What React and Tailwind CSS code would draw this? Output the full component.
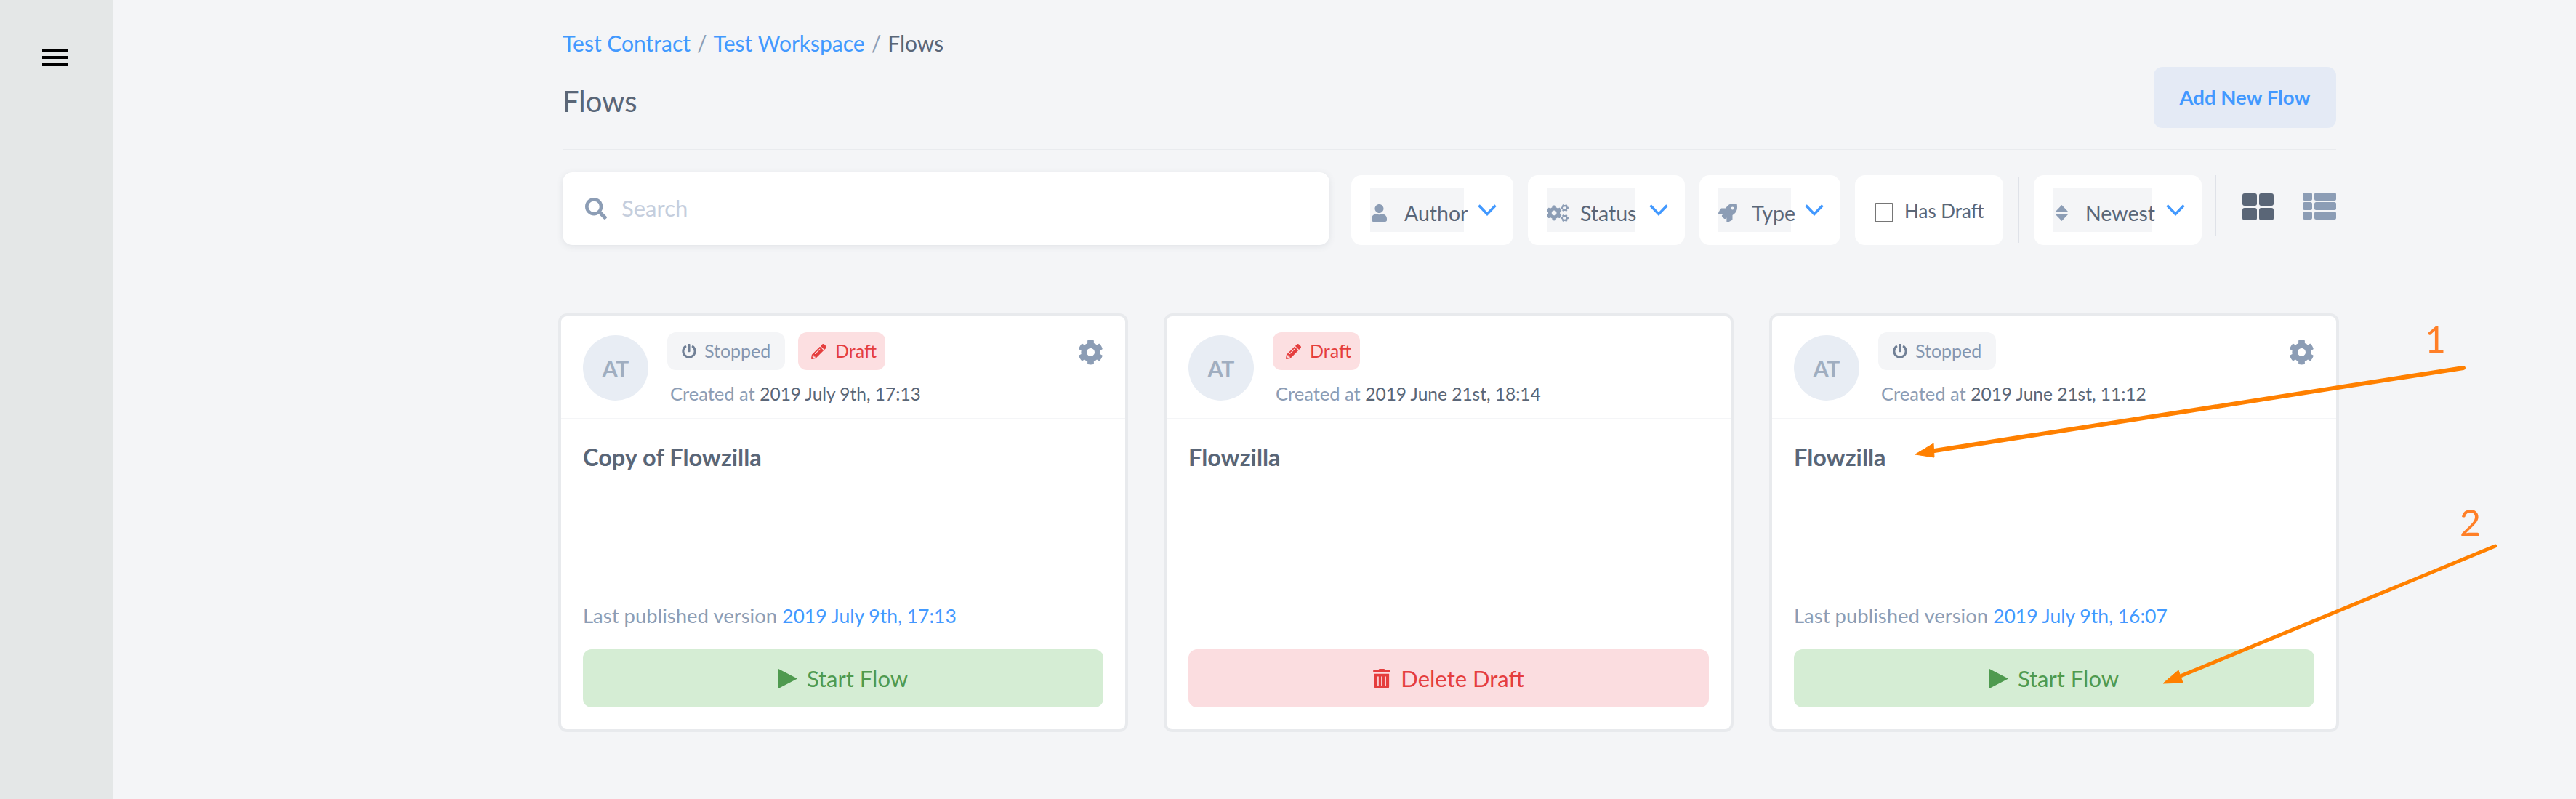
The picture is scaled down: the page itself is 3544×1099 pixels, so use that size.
import { FaUser, FaCogs, FaRocket, FaSearch, FaPowerOff, FaPencilAlt, FaCog, FaTrashAlt } from "react-icons/fa";

const Chevron = () => (
    <svg viewBox="0 0 26 16" className="w-[26px] h-[16px] shrink-0 text-[#4299ff]" fill="none" stroke="currentColor" strokeWidth="3.5">
        <path d="M1.5 1.5 L13 13.5 L24.5 1.5" />
    </svg>
)

const Filter = ({ icon, label, className, boxClassName, gap = "gap-[24px]" }) => (
    <div className={"h-[96px] bg-white rounded-[14px] flex items-center shrink-0 pl-[26px] " + className}>
        <div className={"h-[60px] pt-[8px] bg-[#f4f5f7] flex items-center " + boxClassName + " " + gap}>
            {icon}
            <span className="text-[28.5px] text-[#5a6677] whitespace-nowrap">{label}</span>
        </div>
        <div className="ml-[19px]"><Chevron /></div>
    </div>
)

const Stopped = () => (
    <div className="h-[52px] w-[162px] rounded-[12px] bg-[#f4f5f7] flex items-center pl-[20px] gap-[11px] text-[#8496b0] text-[25px]">
        <FaPowerOff className="w-[20px] h-[22px] text-[#718096]" />
        <span>Stopped</span>
    </div>
)

const Draft = () => (
    <div className="h-[52px] w-[120px] rounded-[12px] bg-[#fcdfe1] flex items-center pl-[18px] gap-[12px] text-[#e53e3e] text-[25px]">
        <FaPencilAlt className="w-[21px] h-[21px]" />
        <span>Draft</span>
    </div>
)

const Card = ({ stopped, draft, gear, created, title, published, danger }) => (
    <div className="w-[784px] h-[576px] border-4 border-[#e8eaed] rounded-[12px] bg-white flex flex-col shrink-0">
        <div className="h-[142px] px-[30px] pt-[22px] flex border-b-2 border-[#f4f5f7] shrink-0">
            <div className="w-[90px] h-[90px] mt-[4px] rounded-full bg-[#e8edf4] text-[#a0aec0] font-bold text-[30px] flex items-center justify-center shrink-0">AT</div>
            <div className="ml-[26px]">
                <div className="flex gap-[18px]">
                    {stopped && <Stopped />}
                    {draft && <Draft />}
                </div>
                <div className="mt-[16px] pl-[4px] text-[25.5px] leading-[32px] text-[#8c9db5]">
                    Created at <span className="text-[24.5px] text-[#5a6677]">{created}</span>
                </div>
            </div>
            {gear && <FaCog className="ml-auto mt-[10px] w-[35px] h-[35px] text-[#8c9db5] shrink-0" />}
        </div>
        <div className="flex-1 flex flex-col px-[30px] pb-[30px]">
            <div className="mt-[32px] text-[32.5px] leading-[40px] font-bold text-[#5a6677]">{title}</div>
            <div className="mt-auto">
                {published && (
                    <div className="mb-[30px] text-[27.5px] leading-[32px] text-[#8c9db5]">
                        Last published version <span className="text-[26.5px] text-[#4299ff]">{published}</span>
                    </div>
                )}
                {danger ? (
                    <button className="w-full h-[80px] rounded-[12px] bg-[#fbdde0] text-[#e53e3e] text-[31px] flex items-center justify-center gap-[14px]">
                        <FaTrashAlt className="w-[24px] h-[27px]" />
                        Delete Draft
                    </button>
                ) : (
                    <button className="w-full h-[80px] rounded-[12px] bg-[#d5edd4] text-[#4f9a4f] text-[31px] flex items-center justify-center gap-[13px]">
                        <svg viewBox="0 0 26 27" className="w-[26px] h-[27px]" fill="currentColor"><path d="M0 0 L26 13.5 L0 27 Z" /></svg>
                        Start Flow
                    </button>
                )}
            </div>
        </div>
    </div>
)

export default function App() {
    return (
        <div className="relative flex min-h-[1099px] h-[1099px] overflow-hidden bg-[#f4f5f7] font-['Lato',sans-serif]">
            <aside className="w-[156px] shrink-0 bg-[#e4e7e7] pt-[67px] pl-[58px]">
                <div className="w-[36px] h-[24px] flex flex-col justify-between">
                    <div className="h-[4px] bg-black" />
                    <div className="h-[4px] bg-black" />
                    <div className="h-[4px] bg-black" />
                </div>
            </aside>
            <main className="ml-[618px] w-[2440px] shrink-0">
                <div className="pt-[39px] text-[30px] leading-[40px] text-[#8c9db5] flex gap-[9px]">
                    <span className="text-[#4299ff]">Test Contract</span>
                    <span>/</span>
                    <span className="text-[#4299ff]">Test Workspace</span>
                    <span>/</span>
                    <span className="text-[#5a6677]">Flows</span>
                </div>
                <div className="mt-[13px] pb-[29px] border-b-2 border-[#e9ebee] flex items-center justify-between">
                    <h1 className="mt-[10px] text-[40px] text-[#5a6677]">Flows</h1>
                    <button className="w-[251px] h-[84px] rounded-[12px] bg-[#e4eaf5] text-[#4299ff] font-bold text-[27.5px]">Add New Flow</button>
                </div>
                <div className="mt-[30px] flex items-start">
                    <div className="w-[1055px] h-[100px] bg-white rounded-[14px] shadow-[0_2px_10px_rgba(90,102,119,0.12)] flex items-center pl-[31px] gap-[20px] shrink-0">
                        <FaSearch className="w-[30px] h-[30px] text-[#8c9db5]" />
                        <span className="text-[31px] text-[#c5cedd] mt-[-2px]">Search</span>
                    </div>
                    <div className="ml-[30px] mt-[4px] flex items-start">
                        <Filter className="w-[223px]" boxClassName="w-[129px] pl-[2px]" icon={<FaUser className="w-[21px] h-[24px] text-[#8c9db5] shrink-0" />} label="Author" />
                        <Filter className="w-[216px] ml-[20px]" boxClassName="w-[122px]" icon={<FaCogs className="w-[30px] h-[26px] text-[#8c9db5] shrink-0" />} label="Status" gap="gap-[16px]" />
                        <Filter className="w-[194px] ml-[20px]" boxClassName="w-[100px]" icon={<FaRocket className="w-[26px] h-[26px] text-[#8c9db5] shrink-0" />} label="Type" gap="gap-[20px]" />
                        <div className="w-[204px] h-[96px] ml-[20px] bg-white rounded-[14px] flex items-center pl-[27px] gap-[15px] shrink-0">
                            <div className="w-[26px] h-[27px] border-2 border-[#767676] rounded-[2px] mt-[7px]" />
                            <span className="text-[26px] text-[#5a6677] whitespace-nowrap mt-[2px]">Has Draft</span>
                        </div>
                        <div className="w-[2px] h-[90px] ml-[20px] mt-[3px] bg-[#dfe2e8]" />
                        <Filter className="w-[231px] ml-[20px]" boxClassName="w-[137px] pl-[4px]" icon={
                            <svg viewBox="0 0 17 22" className="w-[17px] h-[22px] text-[#8c9db5] shrink-0" fill="currentColor">
                                <path d="M0 9 L8.5 0 L17 9 Z" />
                                <path d="M0 13 L17 13 L8.5 22 Z" />
                            </svg>
                        } label="Newest" />
                        <div className="w-[2px] h-[84px] ml-[18px] bg-[#dfe2e8]" />
                        <svg viewBox="0 0 43 37" className="w-[43px] h-[37px] ml-[36px] mt-[25px] text-[#5a6677]" fill="currentColor">
                            <rect x="0" y="0" width="20" height="17" rx="3" />
                            <rect x="23" y="0" width="20" height="17" rx="3" />
                            <rect x="0" y="20" width="20" height="17" rx="3" />
                            <rect x="23" y="20" width="20" height="17" rx="3" />
                        </svg>
                        <svg viewBox="0 0 46 37" className="w-[46px] h-[37px] ml-[40px] mt-[24px] text-[#8c9db5]" fill="currentColor">
                            <rect x="0" y="0" width="13" height="11" rx="2.5" />
                            <rect x="16" y="0" width="30" height="11" rx="2.5" />
                            <rect x="0" y="13" width="13" height="11" rx="2.5" />
                            <rect x="16" y="13" width="30" height="11" rx="2.5" />
                            <rect x="0" y="26" width="13" height="11" rx="2.5" />
                            <rect x="16" y="26" width="30" height="11" rx="2.5" />
                        </svg>
                    </div>
                </div>
                <div className="mt-[94px] -ml-[6px] flex gap-[49px]">
                    <Card stopped draft gear created="2019 July 9th, 17:13" title="Copy of Flowzilla" published="2019 July 9th, 17:13" />
                    <Card draft created="2019 June 21st, 18:14" title="Flowzilla" danger />
                    <Card stopped gear created="2019 June 21st, 11:12" title="Flowzilla" published="2019 July 9th, 16:07" />
                </div>
            </main>

            {/* annotations on top of the screenshot */}
            <span className="absolute left-[3336px] top-[436px] text-[50px] leading-[60px] text-[#ff7f27]">1</span>
            <span className="absolute left-[3384px] top-[688px] text-[50px] leading-[60px] text-[#ff7f27]">2</span>
            <svg className="absolute left-0 top-0 w-[3544px] h-[1099px] pointer-events-none" viewBox="0 0 3544 1099" fill="#ff8000" stroke="#ff8000">
                <line x1="3389" y1="506" x2="2655" y2="621" strokeWidth="6" strokeLinecap="round" />
                <path d="M2635 625 L2660 610 L2661 629 Z" strokeWidth="1" />
                <line x1="3433" y1="751" x2="2990" y2="934" strokeWidth="5" strokeLinecap="round" />
                <path d="M2976 940 L2997 922 L3003 939 Z" strokeWidth="1" />
            </svg>
        </div>
    )
}
